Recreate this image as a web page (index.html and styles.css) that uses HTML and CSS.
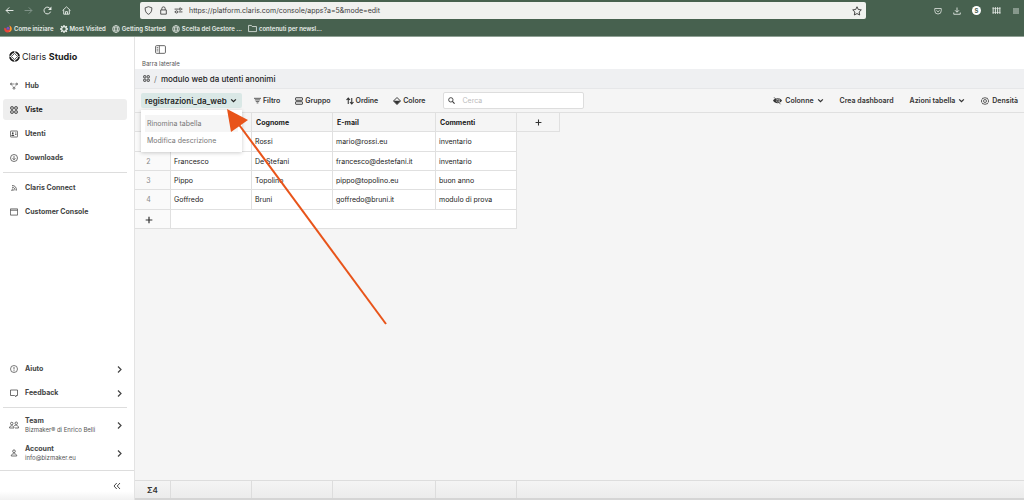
FILE: index.html
```html
<!DOCTYPE html>
<html lang="it">
<head>
<meta charset="utf-8">
<title>Claris Studio</title>
<link rel="stylesheet" href="styles.css">
</head>
<body>
<svg class="defs" aria-hidden="true">
  <symbol id="grid" viewBox="0 0 16 16"><g fill="none" stroke="currentColor" stroke-width="1.8"><rect x="1.5" y="1.5" width="5" height="5" rx="1"/><rect x="9.5" y="1.5" width="5" height="5" rx="1"/><rect x="1.5" y="9.5" width="5" height="5" rx="1"/><rect x="9.5" y="9.5" width="5" height="5" rx="1"/></g></symbol>
  <symbol id="right" viewBox="0 0 10 16"><path d="M2 2l6 6-6 6" fill="none" stroke="currentColor" stroke-width="2.4"/></symbol>
  <symbol id="down" viewBox="0 0 12 12"><path d="M2 4l4 4 4-4" fill="none" stroke="currentColor" stroke-width="2.2"/></symbol>
  <symbol id="globe" viewBox="0 0 16 16"><g fill="none" stroke="currentColor" stroke-width="1.4"><circle cx="8" cy="8" r="6.9"/><ellipse cx="8" cy="8" rx="3.2" ry="6.9"/><path d="M1.5 5.7h13M1.5 10.3h13"/></g></symbol>
  <symbol id="plus" viewBox="0 0 12 12"><path d="M6 1v10M1 6h10" fill="none" stroke="currentColor" stroke-width="1.8"/></symbol>
</svg>

<header class="browser">
  <div class="browser-row">
    <button class="nav-btn" aria-label="Indietro"><svg class="i9" viewBox="0 0 16 16"><path d="M15 8H2M7.500 2.500L2 8l5.500 5.500" fill="none" stroke="currentColor" stroke-width="1.700"/></svg></button>
    <button class="nav-btn dim" aria-label="Avanti"><svg class="i9" viewBox="0 0 16 16"><path d="M1 8h13M8.500 2.500L14 8l-5.500 5.500" fill="none" stroke="currentColor" stroke-width="1.700"/></svg></button>
    <button class="nav-btn" aria-label="Ricarica"><svg class="i9" viewBox="0 0 16 16"><path d="M13.500 10A6 6 0 1 1 13 5" fill="none" stroke="currentColor" stroke-width="1.700"/><path d="M15 1v6H9z" fill="currentColor"/></svg></button>
    <button class="nav-btn" aria-label="Home"><svg class="i9" viewBox="0 0 16 16"><path d="M1 8l7-6.500L15 8M3 7v7.500h10V7M6.300 14.500V10h3.400v4.500" fill="none" stroke="currentColor" stroke-width="1.600"/></svg></button>
    <div class="url">
      <svg class="i9" viewBox="0 0 16 16"><path d="M8 1.200l6 2c0 6-1.500 9.500-6 11.600C3.500 12.700 2 9.200 2 3.200z" fill="none" stroke="currentColor" stroke-width="1.500"/></svg>
      <svg class="i9" viewBox="0 0 16 16"><path d="M3 7h10v7.500H3zM5 7V4.500a3 3 0 0 1 6 0V7" fill="none" stroke="currentColor" stroke-width="1.500"/></svg>
      <svg class="i9" viewBox="0 0 16 16"><g fill="none" stroke="currentColor" stroke-width="1.500"><path d="M1 5.500h7M8 10.500h7"/><circle cx="11" cy="5.500" r="2"/><circle cx="4.500" cy="10.500" r="2"/><path d="M13 5.500h2M1 10.500h1.500"/></g></svg>
      <input class="url-input" aria-label="Indirizzo" value="https://platform.claris.com/console/apps?a=5&amp;mode=edit">
      <svg class="i10" viewBox="0 0 16 16"><path d="M8 1.200l2.100 4.400 4.800.6-3.500 3.400.9 4.800L8 12.100l-4.300 2.300.9-4.800L1.100 6.200l4.800-.6z" fill="none" stroke="currentColor" stroke-width="1.500" stroke-linejoin="round"/></svg>
    </div>
    <div class="browser-tools">
      <svg class="i8" viewBox="0 0 16 16"><path d="M1.500 3h13v4.500a6.500 6.500 0 0 1-13 0zM4.700 6.500L8 9.700l3.300-3.200" fill="none" stroke="currentColor" stroke-width="1.500"/></svg>
      <svg class="i8" viewBox="0 0 16 16"><path d="M8 1v9M4 6.500l4 4 4-4M1.500 11v3.500h13V11" fill="none" stroke="currentColor" stroke-width="1.700"/></svg>
      <span class="ext">S</span>
      <svg class="i9" viewBox="0 0 16 16"><path d="M2 2v12M6 2v12M10 2v12M14 2v12" stroke="currentColor" stroke-width="1.700"/><path d="M1 4.500h14M1 11.500h14" stroke="currentColor"/></svg>
      <svg class="i8" viewBox="0 0 16 16"><path d="M2 4h12M2 8h12M2 12h12" stroke="currentColor" stroke-width="1.600"/></svg>
    </div>
  </div>
  <nav class="bookmarks">
    <a href="#"><svg class="i8" viewBox="0 0 16 16"><path d="M1 5c1 2 2 2 3 1 0 5 7 6 8 0 1-2 0-4-2-5 5 1 6 6 5 9-2 6-11 7-14 1C0 9 0 7 1 5z" fill="#e8453c"/><path d="M10 1c5 1 6 6 5 9-1 3-4 4-6 4 3-2 4-5 3-8 0-2-1-4-2-5z" fill="#f6a52c"/><circle cx="8" cy="6.500" r="3" fill="#7b4fc0"/></svg>Come iniziare</a>
    <a href="#"><svg class="i8" viewBox="0 0 16 16"><circle cx="8" cy="8" r="4.700" fill="none" stroke="currentColor" stroke-width="2.600"/><path d="M8 0v3M8 13v3M0 8h3M13 8h3M2.300 2.300l2.200 2.200M11.500 11.500l2.200 2.200M13.700 2.300l-2.200 2.200M4.500 11.500l-2.200 2.200" stroke="currentColor" stroke-width="2.600"/></svg>Most Visited</a>
    <a href="#"><svg class="i8"><use href="#globe"/></svg>Getting Started</a>
    <a href="#"><svg class="i8"><use href="#globe"/></svg>Scelta del Gestore ...</a>
    <a href="#"><svg class="i9" viewBox="0 0 16 16"><path d="M1 13.500v-11h5l1.500 2H15v9z" fill="none" stroke="currentColor" stroke-width="1.400" stroke-linejoin="round"/></svg>contenuti per newsl...</a>
  </nav>
</header>

<div class="app">
  <aside class="sidebar">
    <div class="logo">
      <svg class="i11" viewBox="0 0 20 20"><circle cx="10" cy="10" r="8" fill="none" stroke="currentColor" stroke-width="3" stroke-dasharray="9.600 3" stroke-dashoffset="-1"/><circle cx="10" cy="10" r="8.800" fill="none" stroke="currentColor"/><path d="M10 4.500l5.500 5.500-5.500 5.500L4.500 10z" fill="none" stroke="currentColor" stroke-width="1.300"/></svg>
      <span>Claris <b>Studio</b></span>
    </div>
    <nav class="menu">
      <a href="#"><svg class="i8" viewBox="0 0 16 16"><path d="M3 4h10M3.500 5L7 11M12.500 5L9 11" stroke="currentColor" stroke-width="1.200" stroke-dasharray="2 1"/><g fill="#fff" stroke="currentColor" stroke-width="1.500"><circle cx="2.500" cy="4" r="1.700"/><circle cx="13.500" cy="4" r="1.700"/><circle cx="8" cy="12.500" r="1.900"/></g></svg>Hub</a>
      <a href="#" class="active"><svg class="i8"><use href="#grid"/></svg>Viste</a>
      <a href="#"><svg class="i8" viewBox="0 0 16 16"><g fill="none" stroke="currentColor" stroke-width="1.500"><rect x=".8" y="2" width="14.400" height="12" rx="1"/><path d="M10 6h3M10 9h3"/></g><circle cx="5.500" cy="6.300" r="1.800" fill="currentColor"/><path d="M2.500 12c0-4 6-4 6 0z" fill="currentColor"/></svg>Utenti</a>
      <a href="#"><svg class="i8" viewBox="0 0 16 16"><g fill="none" stroke="currentColor" stroke-width="1.500"><circle cx="8" cy="8" r="7"/><path d="M8 4v7.500M5 8.500l3 3 3-3"/></g></svg>Downloads</a>
    </nav>
    <hr class="rule">
    <nav class="menu">
      <a href="#"><svg class="i8" viewBox="0 0 16 16"><path d="M4 3c6 0 9 3.500 9 10M4 6.500c4 0 6 2.500 6 6.500M4 10c2 0 3 1 3 3" fill="none" stroke="currentColor" stroke-width="1.500"/><circle cx="4" cy="12.500" r="1.300" fill="currentColor"/></svg>Claris Connect</a>
      <a href="#"><svg class="i8" viewBox="0 0 16 16"><path d="M.8 1.800h14.400v12.400H.8zM.8 4.500h14.400" fill="none" stroke="currentColor" stroke-width="1.500"/></svg>Customer Console</a>
    </nav>
    <div class="spacer"></div>
    <nav class="menu">
      <a href="#"><svg class="i8" viewBox="0 0 16 16"><circle cx="8" cy="8" r="7" fill="none" stroke="currentColor" stroke-width="1.400"/><path d="M8 4v5M8 10.500v2" stroke="currentColor" stroke-width="1.600"/></svg><span class="grow">Aiuto</span><svg class="chev"><use href="#right"/></svg></a>
      <a href="#"><svg class="i8" viewBox="0 0 16 16"><path d="M1 2h14v11h-3v2.500L9 13H1z" fill="none" stroke="currentColor" stroke-width="1.500" stroke-linejoin="round"/></svg><span class="grow">Feedback</span><svg class="chev"><use href="#right"/></svg></a>
    </nav>
    <hr class="rule">
    <nav class="menu people">
      <a href="#"><svg class="team" viewBox="0 0 20 16"><g fill="none" stroke="currentColor" stroke-width="1.500"><circle cx="5.500" cy="5" r="2.500"/><circle cx="14.500" cy="4.500" r="2.500"/><path d="M1 14c0-6 9-6 9 0zM10 10c3-3 9-2 9 4h-7"/></g></svg><span class="grow">Team<small>Bizmaker® di Enrico Belli</small></span><svg class="chev"><use href="#right"/></svg></a>
      <a href="#"><svg class="i8" viewBox="0 0 16 16"><g fill="none" stroke="currentColor" stroke-width="1.500"><circle cx="8" cy="4.500" r="2.700"/><path d="M2.500 14c0-2.500 1.500-4.500 5.500-4.500s5.500 2 5.500 4.500z"/></g></svg><span class="grow">Account<small>info@bizmaker.eu</small></span><svg class="chev"><use href="#right"/></svg></a>
    </nav>
    <div class="collapse"><button aria-label="Comprimi"><svg class="i8" viewBox="0 0 16 16"><path d="M7.500 2L2 8l5.500 6M14 2L8.500 8l5.500 6" fill="none" stroke="currentColor" stroke-width="1.800"/></svg></button></div>
  </aside>

  <main class="main">
    <div class="topstrip">
      <button class="side-toggle"><svg class="panel" viewBox="0 0 20 16"><rect x="1" y="1" width="18" height="14" rx="2" fill="none" stroke="currentColor" stroke-width="1.600"/><path d="M8 1v14M3 4.500h3M3 7.500h3M3 10.500h3" stroke="currentColor" stroke-width="1.400"/></svg>Barra laterale</button>
    </div>
    <div class="crumbs"><svg class="i7"><use href="#grid"/></svg><span class="slash">/</span><span>modulo web da utenti anonimi</span></div>
    <div class="toolbar">
      <div class="picker">
        <button class="picker-btn">registrazioni_da_web<svg class="i7"><use href="#down"/></svg></button>
        <div class="dropdown">
          <button class="hover">Rinomina tabella</button>
          <button>Modifica descrizione</button>
        </div>
      </div>
      <div class="tools">
        <button><svg class="i7" viewBox="0 0 16 16"><path d="M0 3h16M2 6.500h12M4 10h8M6 13.500h4" stroke="currentColor" stroke-width="1.800"/></svg>Filtro</button>
        <button><svg class="i8" viewBox="0 0 16 16"><g fill="none" stroke="currentColor" stroke-width="1.900"><rect x="1" y="1.500" width="14" height="5" rx="1"/><rect x="1" y="9.500" width="14" height="5" rx="1"/></g></svg>Gruppo</button>
        <button><svg class="i8" viewBox="0 0 16 16"><path d="M4.500 14V3M1 6l3.500-4L8 6M11.500 2v11M8 10l3.500 4L15 10" fill="none" stroke="currentColor" stroke-width="2.100"/></svg>Ordine</button>
        <button><svg class="i8" viewBox="0 0 16 16"><path d="M8 1l7 7-7 7-7-7z" fill="none" stroke="currentColor" stroke-width="1.900" stroke-linejoin="round"/><path d="M1 7.500h14L8 15z" fill="currentColor"/></svg>Colore</button>
      </div>
      <label class="search"><svg class="i7" viewBox="0 0 16 16"><circle cx="6.500" cy="6.500" r="5" fill="none" stroke="currentColor" stroke-width="2"/><path d="M10 10l5 5" stroke="currentColor" stroke-width="2.400"/></svg><input type="search" placeholder="Cerca" aria-label="Cerca"></label>
      <div class="tools end">
        <button><svg class="i9" viewBox="0 0 18 16"><path d="M0 8c4-7 14-7 18 0-4 7-14 7-18 0z" fill="currentColor"/><circle cx="10" cy="8" r="3.300" fill="none" stroke="#f5f5f5" stroke-width="1.200"/><path d="M3 .5l13 14" stroke="#f5f5f5" stroke-width="1.200"/><path d="M2 1.500l13 14" stroke="currentColor" stroke-width="1.400"/></svg>Colonne<svg class="i7"><use href="#down"/></svg></button>
        <button>Crea dashboard</button>
        <button>Azioni tabella<svg class="i7"><use href="#down"/></svg></button>
        <button><svg class="i8" viewBox="0 0 16 16"><g fill="none" stroke="currentColor" stroke-width="1.500"><path d="M8 1l2 1.300 2.500-.1 1 2.300 1.700 1.700L14.500 8l.7 2-1.700 1.600-1 2.200-2.500-.1L8 15l-2-1.300-2.500.1-1-2.200L.8 10l.7-2-.7-1.800 1.700-1.700 1-2.300 2.500.1z"/><circle cx="8" cy="8" r="3"/></g></svg>Densità</button>
      </div>
    </div>
    <div class="sheet">
      <table class="grid">
        <colgroup><col class="c-n"><col class="c-a"><col class="c-b"><col class="c-c"><col class="c-d"><col class="c-e"></colgroup>
        <thead><tr><th></th><th></th><th>Cognome</th><th>E-mail</th><th>Commenti</th><th class="add"><button aria-label="Aggiungi colonna"><svg class="i7"><use href="#plus"/></svg></button></th></tr></thead>
        <tbody>
          <tr class="tall"><td class="num"></td><td></td><td>Rossi</td><td>mario@rossi.eu</td><td>inventario</td></tr>
          <tr><td class="num">2</td><td>Francesco</td><td>De Stefani</td><td>francesco@destefani.it</td><td>inventario</td></tr>
          <tr><td class="num">3</td><td>Pippo</td><td>Topolino</td><td>pippo@topolino.eu</td><td>buon anno</td></tr>
          <tr class="tall"><td class="num">4</td><td>Goffredo</td><td>Bruni</td><td>goffredo@bruni.it</td><td>modulo di prova</td></tr>
          <tr class="new"><td class="num"><button aria-label="Aggiungi riga"><svg class="i8"><use href="#plus"/></svg></button></td><td colspan="4"></td></tr>
        </tbody>
      </table>
    </div>
    <div class="totals"><span class="c-n">Σ4</span><span class="c-a"></span><span class="c-b"></span><span class="c-c"></span><span class="c-d"></span></div>
  </main>
</div>
<svg class="arrow" viewBox="0 0 162 218" aria-hidden="true"><path d="M11 14L160 216" stroke="#e8541a" stroke-width="2"/><path d="M1 1L22 12L5 24z" fill="#e8541a"/></svg>
</body>
</html>
```
FILE: styles.css
```css
* { box-sizing: border-box; }
body {
  margin: 0;
  height: 100vh;
  display: flex;
  flex-direction: column;
  overflow: hidden;
  font: 500 7px/10px Inter, "Liberation Sans", sans-serif;
  color: #333;
  background: #fff;
}
button, input { font: inherit; color: inherit; border: 0; background: none; padding: 0; margin: 0; outline: 0; }
button { display: flex; align-items: center; }
a { color: inherit; text-decoration: none; }
svg { flex: none; display: block; }
.defs { position: absolute; width: 0; height: 0; }
.i7 { width: 7px; height: 7px; }
.i8 { width: 8px; height: 8px; }
.i9 { width: 9px; height: 9px; }
.i10 { width: 10px; height: 10px; }
.i11 { width: 11px; height: 11px; }

.browser { flex: none; background: #47614f; color: #e9eeea; border-bottom: 1px solid #8fa094; }
.browser-row { display: flex; align-items: center; height: 21px; padding: 0 4px 0 5px; }
.nav-btn { width: 19px; }
.nav-btn.dim { color: #82958a; }
.url { display: flex; align-items: center; gap: 6px; width: 71.5%; height: 17px; margin-left: 59px; padding: 0 4px; border-radius: 2px; background: #f0f1ef; color: #3c3c3c; }
.url-input { flex: 1; min-width: 0; font-size: 7px; font-weight: 400; }
.browser-tools { display: flex; align-items: center; gap: 11px; margin-left: auto; }
.ext { width: 9px; height: 9px; border-radius: 50%; background: #fff; color: #47614f; font-size: 6px; font-weight: 700; line-height: 9px; text-align: center; }
.bookmarks { display: flex; align-items: center; gap: 6px; height: 15px; padding: 0 4px; font-size: 6px; font-weight: 600; white-space: nowrap; }
.bookmarks a { display: flex; align-items: center; gap: 2px; }

.app { flex: 1; min-height: 0; display: flex; }
.sidebar { flex: none; width: 135px; display: flex; flex-direction: column; border-right: 1px solid #e3e3e3; }
.logo { display: flex; align-items: center; gap: 2px; padding: 13px 9px 12px; font-size: 9px; line-height: 13px; font-weight: 400; color: #1c1c1c; }
.menu { display: flex; flex-direction: column; gap: 3px; padding: 0 7px 0 3px; }
.menu a { display: flex; align-items: center; gap: 7px; height: 21px; padding: 1px 5px 0 7px; border-radius: 3px; font-size: 7px; font-weight: 700; color: #444; }
.menu a.active { background: #eee; color: #222; }
.menu .grow { flex: 1; }
.menu small { display: block; font-size: 6px; line-height: 8px; font-weight: 400; color: #555; white-space: nowrap; }
.rule { width: 124px; margin: 4px 0 4px 3px; border: 0; border-top: 1px solid #ddd; }
.spacer { flex: 1; }
.people a { height: 25px; }
.people { padding-bottom: 5px; }
.people .team { width: 10px; height: 8px; margin: 0 -1px; }
.chev { width: 5px; height: 9px; }
.collapse { display: flex; justify-content: flex-end; align-items: center; height: 30px; padding-right: 13px; border-top: 1px solid #ddd; background: linear-gradient(#fff 70%, #f1f1f1); }

.main { flex: 1; min-width: 0; display: flex; flex-direction: column; background: #f5f5f5; }
.topstrip { height: 32px; padding: 8px 7px 0; background: #fff; }
.side-toggle { flex-direction: column; gap: 6px; font-size: 6px; line-height: 8px; font-weight: 400; color: #555; }
.panel { width: 11px; height: 9px; }
.crumbs { display: flex; align-items: center; gap: 4px; height: 20px; padding: 0 8px; background: #eff0f2; font-size: 8px; font-weight: 500; color: #222; border-bottom: 1px solid #e6e7e9; }
.slash { font-weight: 400; color: #777; }
.toolbar { display: flex; align-items: center; height: 23px; padding: 0 6px; }
.picker { position: relative; }
.picker-btn { gap: 3px; height: 15px; width: 101px; padding: 0 4px; border-radius: 2px; background: #dae8e6; color: #222; font-size: 8px; font-weight: 600; }
.dropdown { position: absolute; top: 17px; left: 0; width: 101px; padding: 5px 4px 3px; background: #fff; box-shadow: 0 1px 4px rgba(0, 0, 0, .2); }
.dropdown button { width: 100%; height: 17px; padding-left: 2px; font-size: 7px; font-weight: 400; color: #777; }
.dropdown .hover { background: #f5f5f5; }
.tools { display: flex; gap: 15px; margin-left: 12px; font-weight: 600; white-space: nowrap; }
.tools button { gap: 2px; }
.tools.end { gap: 16px; margin-left: auto; }
.tools.end button { gap: 3px; }
.search { display: flex; align-items: center; gap: 7px; width: 141px; height: 17px; margin-left: 18px; padding: 0 4px; background: #fff; border: 1px solid #ddd; border-radius: 2px; }
.search input { flex: 1; min-width: 0; font-weight: 400; }
.search input::placeholder { color: #bbb; }

.sheet { flex: 1; min-height: 0; border-top: 1px solid #e0e0e0; }
.grid { table-layout: fixed; width: 424px; border-collapse: separate; border-spacing: 0; }
.c-n { width: 36px; }
.c-a, .c-b, .c-d { width: 81px; }
.c-c { width: 103px; }
.c-e { width: 43px; }
.grid th, .grid td { height: 19px; padding: 0 3px; text-align: left; border-right: 1px solid #e0e0e0; border-bottom: 1px solid #e0e0e0; white-space: nowrap; }
.grid th { padding: 2px 4px 0; font-weight: 700; background: #f5f5f5; color: #222; }
.grid th.add { padding: 0 4px; }
.grid td { padding-top: 1px; font-weight: 400; background: #fff; color: #222; }
.grid .tall td { height: 20px; }
.grid .num { text-align: center; padding: 1px 11px 0 3px; padding-right: 11px; background: #fafafa; color: #888; }
.grid .num button, .grid .add button { margin: 0 auto; color: #333; }
.totals { display: flex; height: 20px; border-top: 1px solid #ddd; border-bottom: 2px solid #d5d5d5; font-size: 8px; font-weight: 600; line-height: 18px; background: linear-gradient(#f4f4f4, #ececec); }
.totals span { border-right: 1px solid #ddd; text-align: center; }

.arrow { position: absolute; left: 226px; top: 108px; width: 162px; height: 218px; pointer-events: none; }
```
